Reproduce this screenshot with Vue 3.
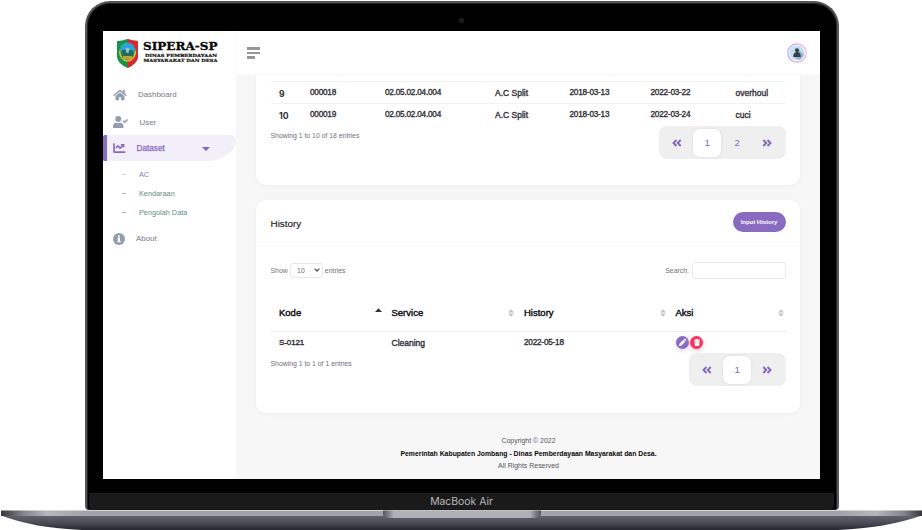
<script setup>
const assets = [
  ['9', '000018', '02.05.02.04.004', 'A.C Split', '2018-03-13', '2022-03-22', 'overhoul'],
  ['10', '000019', '02.05.02.04.004', 'A.C Split', '2018-03-13', '2022-03-24', 'cuci'],
]
const subMenu = ['AC', 'Kendaraan', 'Pengolah Data']
const columns = ['Kode', 'Service', 'History', 'Aksi']
const pagers = { assets: ['1', '2'], history: ['1'] }
</script>

<template>
  <div class="device">
    <div class="lid">
      <div class="bezel-top"><i class="camera"></i></div>
      <div class="screen">
        <aside class="sidebar">
          <div class="brand">
            <svg width="105" height="32" viewBox="0 0 105 32">
              <g transform="translate(0 -1)">
                <path d="M1 3Q6 3 11.500 1Q17 3 22 3V19Q21 26 11.500 30Q2 26 1 19Z" fill="#14964a" />
                <path d="M11.500 1Q17 3 22 3V19Q21 26 11.500 30Z" fill="#df2630" />
                <circle cx="11.500" cy="14" r="8.700" fill="#5a9849" />
                <path d="M4 11Q6 4.500 11.500 4.500T19 11L16 17H7Z" fill="#2da3dc" />
                <path d="M5 14Q8 9 11.500 14Q15 10 18 14L16 20H7Z" fill="#226b61" />
                <path d="M9.500 10h4l-1 5h-2z" fill="#98c5bd" />
                <path d="M3.500 13Q4 22 11.500 23Q19 22 19.500 13" fill="none" stroke="#d6bd3b" stroke-width="1.500" />
                <path d="M7 18h9v3H7z" fill="#bda334" />
              </g>
              <text class="brand-name" x="27" y="11.300" textLength="74.500" lengthAdjust="spacingAndGlyphs">SIPERA-SP</text>
              <text class="brand-sub" x="29" y="17.900" textLength="72" lengthAdjust="spacingAndGlyphs">DINAS PEMBERDAYAAN</text>
              <text class="brand-sub" x="27.500" y="22.900" textLength="74" lengthAdjust="spacingAndGlyphs">MASYARAKAT DAN DESA</text>
            </svg>
          </div>
          <nav>
            <a class="item home">
              <svg width="14" height="12" viewBox="0 0 576 512"><path d="M280 148L96 300v164q0 16 16 16h112q16 0 16-16v-96q0-16 16-16h64q16 0 16 16v96q0 16 16 16h112q16 0 16-16V300L296 148q-8-5-16 0zM571 251l-83-69V44q0-12-12-12h-56q-12 0-12 12v72l-90-74q-30-23-61 0L5 251q-9 8-2 17l26 31q8 9 17 2L280 107q8-5 16 0l235 194q9 7 17-2l26-31q7-9-3-17z" /></svg>
              <span>Dashboard</span>
            </a>
            <a class="item user">
              <svg width="15" height="12" viewBox="0 0 640 512"><path d="M224 256a128 128 0 1 0 0-256 128 128 0 0 0 0 256zm90 32h-17a174 174 0 0 1-146 0h-17C60 288 0 348 0 422v42c0 27 21 48 48 48h352c27 0 48-21 48-48v-42c0-74-60-134-134-134z" /><path d="M636 159l-28-28q-9-6-17 0L496 226l-41-42q-9-6-17 0l-28 28q-7 9 0 17l78 78q8 7 16 0l132-131q6-9 0-17z" /></svg>
              <span>User</span>
            </a>
            <a class="item dataset">
              <svg width="13" height="12" viewBox="0 0 512 450"><path d="M464 354H64V50q0-16-16-16H16Q0 34 0 50v336q0 32 32 32h432q16 0 16-16v-32q0-16-16-16zM432 66H314q-26 3-15 30l33 33-60 60-67-68q-23-18-45 0l-64 68v56q11 10 22 0l65-57 66 67q23 18 46 0l82-82 33 33q27 11 30-15V82q0-16-8-16z" transform="translate(8 0)" /></svg>
              <span>Dataset</span>
              <i class="caret"></i>
            </a>
            <div class="sub">
              <a v-for="(label, i) in subMenu" :key="label" :class="{ current: i === 0 }"><i></i><span>{{ label }}</span></a>
            </div>
            <a class="item about">
              <svg width="12" height="12" viewBox="0 0 24 24"><circle cx="12" cy="12" r="12" /><path d="M10 5h4v4h-4zM9 10h5v6h1.500v2.500h-7V16H10v-3.500H9z" fill="#fff" /></svg>
              <span>About</span>
            </a>
          </nav>
        </aside>
        <div class="page">
          <header>
            <div class="burger"><i></i><i></i><i></i></div>
            <svg class="avatar" width="20" height="20" viewBox="0 0 20 20">
              <defs><linearGradient id="ring"><stop stop-color="#c3a0f3" /><stop offset="1" stop-color="#f9aed8" /></linearGradient></defs>
              <circle cx="10" cy="10" r="9.200" fill="#fff" stroke="url(#ring)" stroke-width="1.200" />
              <circle cx="10" cy="10" r="7.600" fill="#bfdff2" />
              <path d="M12 7l5 5-4 5-5-2z" fill="#91b5ca" />
              <circle cx="10" cy="7.300" r="2" fill="#373d42" />
              <path d="M6.300 14v-1.500Q6.500 9.700 9 9.200V8.500h2v.7Q13.500 9.700 13.700 12.500V14z" fill="#373d42" />
            </svg>
          </header>
          <main>
            <section class="card assets">
              <div class="asset-row" v-for="row in assets" :key="row[0]">
                <span v-for="(cell, i) in row" :key="i" :class="{ num: i === 0, word: i === 3 || i === 6 }">{{ cell }}</span>
              </div>
              <div class="table-foot">
                <p class="info">Showing 1 to 10 of 18 entries</p>
                <div class="pager">
                  <span><svg width="10" height="8" viewBox="0 0 10 8"><path d="M4.500 1L1.500 4l3 3M8.700 1l-3 3 3 3" /></svg></span>
                  <span v-for="p in pagers.assets" :key="p" :class="{ on: p === '1' }">{{ p }}</span>
                  <span><svg width="10" height="8" viewBox="0 0 10 8"><path d="M1.300 1l3 3-3 3M5.500 1l3 3-3 3" /></svg></span>
                </div>
              </div>
            </section>
            <section class="card history">
              <div class="card-head"><h2>History</h2><button>Input History</button></div>
              <div class="tools">
                <div class="length">Show
                  <b class="select">10<svg width="6" height="4" viewBox="0 0 6 4"><path d="M.6.6L3 3 5.400.6" fill="none" stroke="#555" stroke-width="1.300" /></svg></b>
                  entries</div>
                <label class="search">Search:<input /></label>
              </div>
              <div class="hist-row heading">
                <div v-for="(c, i) in columns" :key="c"><span>{{ c }}</span>
                  <svg v-if="i" width="6" height="8" viewBox="0 0 6 8">
                    <path d="M0 3.500L3 .2l3 3.300zM0 4.500h6L3 7.800z" fill="#c4c4c4" />
                  </svg>
                  <svg v-else class="asc" width="7" height="8" viewBox="0 0 7 8"><path d="M0 4L3.500 .3 7 4z" fill="#333" /></svg>
                </div>
              </div>
              <div class="hist-row body">
                <div class="code">S-0121</div><div class="word">Cleaning</div><div>2022-05-18</div>
                <div class="actions">
                  <i class="edit"><svg width="9" height="9" viewBox="0 0 8 8"><path d="M.8 7.200l.5-2.200L4.700 1.600l1.700 1.700L3 6.700zM5.200 1.100l.5-.4q.4-.2.700 0l.9.900q.3.400 0 .7l-.4.500z" fill="#fff" /></svg></i>
                  <i class="trash"><svg width="6" height="7" viewBox="0 0 6 7"><path d="M0 .6h1.800L2.200 0h1.600l.4.600H6v.8H0zM.5 1.700h5L5.200 7H.8z" fill="#fff" /></svg></i>
                </div>
              </div>
              <div class="table-foot">
                <p class="info">Showing 1 to 1 of 1 entries</p>
                <div class="pager">
                  <span><svg width="10" height="8" viewBox="0 0 10 8"><path d="M4.500 1L1.500 4l3 3M8.700 1l-3 3 3 3" /></svg></span>
                  <span v-for="p in pagers.history" :key="p" class="on">{{ p }}</span>
                  <span><svg width="10" height="8" viewBox="0 0 10 8"><path d="M1.300 1l3 3-3 3M5.500 1l3 3-3 3" /></svg></span>
                </div>
              </div>
            </section>
            <footer>
              <p>Copyright © 2022</p>
              <p class="owner">Pemerintah Kabupaten Jombang - Dinas Pemberdayaan Masyarakat dan Desa.</p>
              <p>All Rights Reserved</p>
            </footer>
          </main>
        </div>
      </div>
      <div class="chin">MacBook Air</div>
    </div>
    <svg class="base" width="922" height="20" viewBox="0 0 922 20">
      <defs>
        <linearGradient id="edge"><stop stop-color="#35363b" /><stop offset=".025" stop-color="#85868b" /><stop offset=".05" stop-color="#b5b6ba" /><stop offset=".09" stop-color="#a3a4a9" /><stop offset=".91" stop-color="#a3a4a9" /><stop offset=".95" stop-color="#b5b6ba" /><stop offset=".98" stop-color="#85868b" /><stop offset="1" stop-color="#35363b" /></linearGradient>
        <linearGradient id="under" x2="0" y2="1"><stop stop-color="#62636c" /><stop offset=".5" stop-color="#4b4c57" /><stop offset="1" stop-color="#24252d" /></linearGradient>
        <linearGradient id="notch"><stop stop-color="#55565b" /><stop offset=".03" stop-color="#77787d" /><stop offset=".07" stop-color="#b0b1b5" /><stop offset=".93" stop-color="#b0b1b5" /><stop offset=".97" stop-color="#77787d" /><stop offset="1" stop-color="#55565b" /></linearGradient>
      </defs>
      <path d="M1 5.500H922Q886 18 838 20H82Q34 18 1 5.500Z" fill="url(#under)" />
      <path d="M1 .5H922V6H1Z" fill="url(#edge)" />
      <path d="M383 .5H541V4Q541 8 534 8H390Q383 8 383 4Z" fill="url(#notch)" />
    </svg>
  </div>
</template>

<style>
body { margin: 0; background: #fff; overflow: hidden; }
</style>

<style scoped>
* { box-sizing: border-box; }
p, h2 { margin: 0; font-weight: 400; }
i { font-style: normal; }
svg { display: block; flex: none; }
.device { width: 922px; height: 530px; padding-top: 1px; font-family: "Liberation Sans", Arial, sans-serif; overflow: hidden; }
.lid { width: 754px; height: 509px; margin-left: 84.500px; border: 2px solid #55565a; border-bottom: 0; border-radius: 25px 25px 4px 4px; background: #000; box-shadow: inset 0 0 0 1px #242426; padding: 0 1.500px; display: flex; flex-direction: column; }
.bezel-top { height: 28px; display: flex; justify-content: center; padding: 15px 0 0 0; }
.camera { width: 5px; height: 5px; border-radius: 50%; background: #15171c; border: 1px solid #25262b; }
.screen { width: 717px; height: 448px; margin-left: 15px; display: flex; background: #f7f7f7; overflow: hidden; flex: none; }
.sidebar { width: 133px; background: #fff; flex: none; }
.brand { height: 48px; padding: 8px 0 0 13px; }
.brand-name { font: 700 11.500px "DejaVu Serif", serif; fill: #080808; stroke: #080808; stroke-width: .3px; }
.brand-sub { font: 700 4.200px "DejaVu Serif", serif; fill: #111; stroke: #111; stroke-width: .2px; }
nav { padding-top: 2px; }
.item { display: flex; align-items: center; height: 27px; padding-left: 10px; font-size: 7.900px; color: #737b87; }
.item svg { fill: #929dad; }
.item.home { height: 29px; padding-bottom: 2px; }
.home span { margin-left: 11px; }
.user { height: 25px; padding-bottom: 1px; }
.user span { margin-left: 11.500px; }
.dataset { height: 26px; border-left: 4px solid #896dc2; border-radius: 2px 8px 36px 2px / 2px 6px 26px 2px; background: #f2eff9; padding-left: 6px; color: #8968be; -webkit-text-stroke: .25px #8968be; }
.dataset svg { fill: #8968be; }
.dataset span { margin-left: 10.500px; font-size: 8.200px; }
.caret { margin: 2px 0 0 37px; border: 4px solid transparent; border-top-color: #8366ba; border-bottom: 0; }
.sub { padding: 4px 0 0 19px; }
.sub a { height: 19px; display: flex; align-items: center; font-size: 7.300px; color: #648b83; }
.sub a i { width: 3.500px; height: 1px; background: #b4a8c9; margin: 0 13.500px 0 0; }
.sub a.current { color: #8976bd; }
.sub a.current i { background: #d5cde6; }
.about { height: 33px; padding-bottom: 0; }
.about span { margin-left: 11px; }
.page { flex: 1; min-width: 0; display: flex; flex-direction: column; }
header { height: 44px; flex: none; background: #fff; border-left: 1px solid #f8f8f8; border-bottom: 1px solid #fafafa; display: flex; justify-content: space-between; align-items: center; padding: 0 13px 0 10px; }
.burger { display: grid; gap: 2px; padding-top: 1px; }
.burger i { width: 13px; height: 2.500px; background: #969798; }
.burger i:last-child { width: 8px; }
main { padding: 0 20px; }
.card { width: 544px; background: #fff; box-shadow: 0 1px 5px rgba(70,70,70,.055); padding: 0 14.500px; }
.assets { height: 110px; border-radius: 0 0 10px 10px; padding-top: 6px; }
.asset-row { height: 22px; border-top: 1px solid #f2f2f2; display: grid; grid-template-columns: 31px 75px 110px 74.500px 81px 85px 1fr; padding-left: 8.500px; align-items: center; font-size: 8.200px; letter-spacing: -.21px; -webkit-text-stroke: .35px #2f2f36; color: #2f2f36; }
.word { font-size: 8.500px; letter-spacing: 0; }
.num { font: 700 8.600px Inter, sans-serif; letter-spacing: 0; -webkit-text-stroke: 0; padding-top: 2px; }
.table-foot { display: flex; justify-content: space-between; }
.info { font-size: 6.860px; color: #707078; line-height: 8px; margin-top: 7px; }
.pager { height: 33px; border-radius: 8px; background: #efefef; display: flex; padding: 0 3px; align-items: center; font-size: 9.800px; color: #8566bc; margin-top: 1px; }
.pager span { width: 30.200px; height: 28px; display: grid; place-items: center; }
.pager svg { fill: none; stroke: #8566bc; stroke-width: 1.900; }
.pager .on { width: 28px; margin: 0 1px; background: #fff; border-radius: 7px; box-shadow: 0 0 3px rgba(0,0,0,.09); }
.history { height: 213px; border-radius: 10px; margin-top: 15px; }
.history .pager { margin-top: 0; }
.card-head { height: 47px; margin: 0 -14.500px; padding: 0 14.500px; border-bottom: 1px solid #fafafa; display: flex; justify-content: space-between; align-items: center; }
h2 { font-size: 9.900px; color: #101014; -webkit-text-stroke: .1px #101014; }
button { width: 53px; height: 20px; border: 0; border-radius: 10px; background: #896bc0; color: #fff; font: 700 5.950px "Liberation Sans", sans-serif; padding: 0; margin-bottom: 3px; white-space: nowrap; }
.tools { height: 47px; display: flex; justify-content: space-between; align-items: center; font-size: 6.900px; color: #707078; }
.length { display: flex; align-items: center; gap: 1.800px; margin-bottom: 1px; }
.select { width: 33.500px; height: 15px; border: 1px solid #e7e7e9; border-radius: 3px; display: flex; align-items: center; justify-content: space-between; padding: 0 2px 0 6.500px; font-weight: 400; }
.search { display: flex; align-items: center; gap: 3px; }
.search input { width: 93.500px; height: 17px; border: 1px solid #e9e9eb; border-radius: 3px; background: #fff; padding: 0; }
.hist-row { display: grid; grid-template-columns: 112.500px 132.500px 151.500px 1fr; padding-left: 8.500px; }
.heading { height: 38px; align-items: center; border-bottom: 1px solid #ededed; font-size: 9.500px; color: #0d0d10; -webkit-text-stroke: .4px #0d0d10; }
.heading > div { display: flex; justify-content: space-between; align-items: center; padding-right: 10px; }
.heading > div:last-child { padding-right: 2px; }
.heading .asc { margin-top: -2px; }
.body { height: 21px; align-items: center; font-size: 8.200px; letter-spacing: -.21px; color: #2f2f36; -webkit-text-stroke: .35px #2f2f36; }
.body .word { letter-spacing: 0; }
.code { font-size: 8px; letter-spacing: -.1px; }
.actions { display: flex; gap: 1.500px; }
.actions i { width: 13px; height: 13px; border-radius: 50%; display: grid; place-items: center; }
.edit { background: #896bc0; box-shadow: 0 2px 5px #896bc044; }
.trash { background: #ff2f59; box-shadow: 0 2px 5px #ff2f5944; }
footer { padding-top: 22px; text-align: center; font-size: 6.950px; line-height: 12.500px; color: #55555a; margin-left: 1px; }
.owner { font-weight: 700; font-size: 6.860px; color: #080808; }
.chin { margin: 14px 1px 0; height: 17px; background: #1a1a1a; border-radius: 0 0 5px 5px; color: #b9b9bb; text-align: center; font: 10.400px/18px Inter, sans-serif; flex: none; }
.base { margin-top: 0; }
</style>
